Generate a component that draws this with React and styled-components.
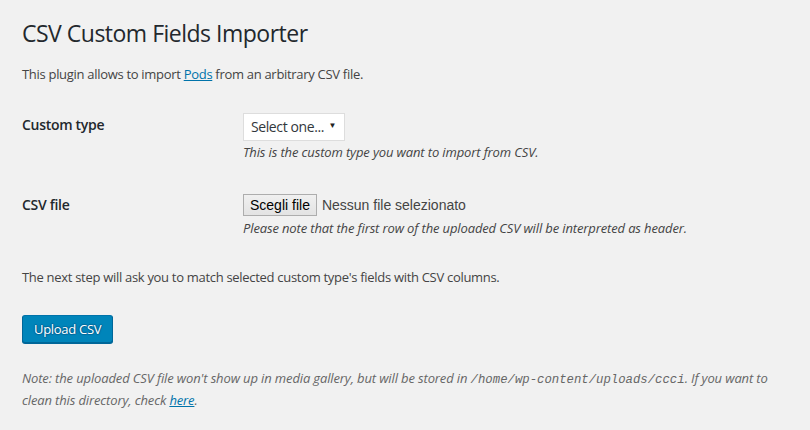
import React from "react";
import styled, { createGlobalStyle } from "styled-components";

const Global = createGlobalStyle`
  html, body { margin: 0; padding: 0; background: #f1f1f1; }
  body {
    font-family: "Open Sans", "Noto Sans", sans-serif;
    font-size: 13px;
    line-height: 1.5;
    color: #444;
  }
`;

const Wrap = styled.div`
  padding: 19px 20px 0 22px;
  display: flex;
  flex-direction: column;
`;

const Title = styled.h1`
  margin: 0;
  font-size: 23px;
  font-weight: 400;
  line-height: 29px;
  letter-spacing: -0.5px;
  color: #23282d;
`;

const Text = styled.p`
  margin: ${(p) => p.$mt || 0}px 0 0;
  font-size: 13px;
  line-height: 19.5px;
  letter-spacing: -0.3px;
  color: #444;
`;

const Link = styled.a`
  color: #0073aa;
  text-decoration: underline;
`;

const Form = styled.div`
  display: grid;
  grid-template-columns: 221px 1fr;
  margin-top: ${(p) => p.$mt}px;
`;

const Label = styled.div`
  padding: ${(p) => p.$pt}px 0 0;
  font-size: 14px;
  font-weight: 600;
  line-height: 18px;
  letter-spacing: -0.3px;
  color: #23282d;
`;

const Field = styled.div`
  display: flex;
  flex-direction: column;
  align-items: flex-start;
  padding-top: ${(p) => p.$pt}px;
`;

const Select = styled.div`
  box-sizing: border-box;
  height: 28px;
  width: 102px;
  display: flex;
  align-items: center;
  justify-content: space-between;
  padding: 0 8px 0 7px;
  background: #fff;
  border: 1px solid #ddd;
  font-size: 14px;
  letter-spacing: -0.4px;
  white-space: nowrap;
  color: #32373c;
`;

const Arrow = styled.span`
  font-size: 8px;
  color: #222;
  margin-top: -4px;
`;

const Description = styled.p`
  margin: ${(p) => p.$mt || 0}px 0 0;
  font-size: 13px;
  line-height: 19.5px;
  font-style: italic;
  letter-spacing: -0.13px;
  color: #444;
`;

const FileRow = styled.div`
  display: flex;
  align-items: center;
  gap: 5px;
  height: 22px;
  font-family: "Liberation Sans", Arial, sans-serif;
  font-size: 14px;
  color: #444;
  margin-bottom: 3px;
`;

const FileButton = styled.button`
  box-sizing: border-box;
  height: 22px;
  padding: 0 6px;
  font-family: "Liberation Sans", Arial, sans-serif;
  font-size: 14px;
  color: #000;
  background: linear-gradient(#f0f0f0, #e3e3e3);
  border: 1px solid #adadad;
  border-radius: 0;
`;

const Primary = styled.button`
  align-self: flex-start;
  box-sizing: border-box;
  height: 28px;
  padding: 0 11px 1px;
  margin-top: ${(p) => p.$mt}px;
  font-family: inherit;
  font-size: 13px;
  line-height: 26px;
  letter-spacing: -0.3px;
  color: #fff;
  background: #0085ba;
  border: 1px solid;
  border-color: #0073aa #006799 #006799;
  border-radius: 3px;
  box-shadow: 0 1px 0 #006799;
  text-shadow: 0 -1px 1px #006799, 1px 0 1px #006799, 0 1px 1px #006799, -1px 0 1px #006799;
`;

const Note = styled.p`
  margin: ${(p) => p.$mt}px 0 0;
  font-size: 13px;
  line-height: 19.5px;
  font-style: italic;
  letter-spacing: -0.13px;
  color: #666;
`;

const Code = styled.code`
  font-family: "Liberation Mono", "DejaVu Sans Mono", monospace;
  font-size: 12.3px;
  letter-spacing: 0;
`;

export default function App() {
  return (
    <>
      <Global />
      <Wrap>
        <Title>CSV Custom Fields Importer</Title>
        <Text $mt={17}>
          This plugin allows to import <Link href="#">Pods</Link> from an arbitrary CSV file.
        </Text>
        <Form $mt={23}>
          <Label $pt={8}>Custom type</Label>
          <Field $pt={5}>
            <Select>
              <span>Select one...</span>
              <Arrow>▼</Arrow>
            </Select>
            <Description $mt={2}>This is the custom type you want to import from CSV.</Description>
          </Field>
          <Label $pt={34}>CSV file</Label>
          <Field $pt={32}>
            <FileRow>
              <FileButton>Scegli file</FileButton>
              <span>Nessun file selezionato</span>
            </FileRow>
            <Description>Please note that the first row of the uploaded CSV will be interpreted as header.</Description>
          </Field>
        </Form>
        <Text $mt={29}>
          The next step will ask you to match selected custom type's fields with CSV columns.
        </Text>
        <Primary $mt={28}>Upload CSV</Primary>
        <Note $mt={26}>
          Note: the uploaded CSV file won't show up in media gallery, but will be stored in{" "}
          <Code>/home/wp-content/uploads/ccci</Code>. If you want to clean this directory, check{" "}
          <Link href="#">here</Link>.
        </Note>
      </Wrap>
    </>
  );
}
